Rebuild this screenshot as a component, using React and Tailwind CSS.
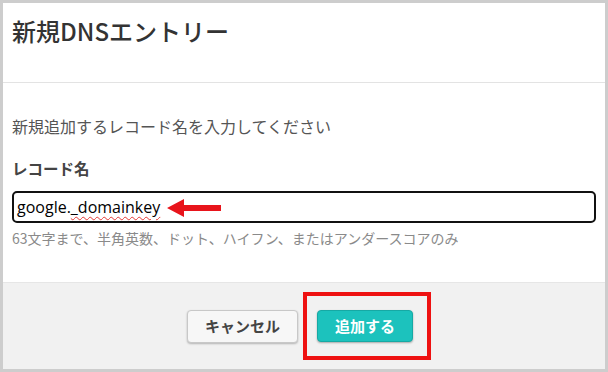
import React from 'react';

const font = { fontFamily: '"Noto Sans CJK JP", "Noto Sans", sans-serif' };

const Arrow = () => (
    <svg width="56" height="20" viewBox="0 0 56 20" className="absolute left-[153px] top-[5px]">
        <polygon points="0,10 17,1 17,7 54,7 54,13 17,13 17,19" fill="#e8141b" />
    </svg>
);

export default function App() {
    return (
        <div className="w-[608px] h-[372px] bg-[#cdcdcd] p-[3px]" style={font}>
            <div className="h-full flex flex-col bg-white">
                {/* header */}
                <div className="h-[80px] border-b border-[#e3e3e3] px-[9px] pt-[12px]">
                    <h1 className="text-[24px] leading-[32px] font-medium text-[#333]">新規DNSエントリー</h1>
                </div>

                {/* body */}
                <div className="flex-1 px-[9px] pt-[32px]">
                    <p className="text-[16px] leading-[22px] text-[#555]">新規追加するレコード名を入力してください</p>
                    <p className="mt-[20px] text-[15.5px] leading-[22px] font-bold text-[#444]">レコード名</p>
                    <div className="relative mt-[12px] h-[32px] rounded-[5px] border-2 border-[#111] pl-[3px] flex items-center">
                        <span className="text-[16px] text-black" style={{ fontFamily: '"Open Sans", "Noto Sans", sans-serif' }}>
                            google.<span className="underline decoration-wavy decoration-[#e53935] decoration-1 underline-offset-[3px]">_domainkey</span>
                        </span>
                        <Arrow />
                    </div>
                    <p className="mt-[5px] text-[14px] leading-[20px] text-[#8a8a8a]">63文字まで、半角英数、ドット、ハイフン、またはアンダースコアのみ</p>
                </div>

                {/* footer */}
                <div className="h-[87px] bg-[#f1f1f1] border-t border-[#e6e6e6] flex items-center justify-center gap-[19px] pr-[8px]">
                    <button className="w-[111px] h-[33px] rounded-[4px] border border-[#c8c8c8] bg-[#f7f7f7] shadow-[0_1px_2px_rgba(0,0,0,0.25)] text-[15px] font-bold text-[#444]">
                        キャンセル
                    </button>
                    <div className="relative">
                        <button className="w-[96px] h-[32px] rounded-[4px] bg-[#1cc2bd] border border-[#16a9a4] shadow-[0_1px_2px_rgba(0,0,0,0.3)] text-[15px] font-bold text-white">
                            追加する
                        </button>
                        <div className="absolute -left-[14px] -top-[18px] w-[128px] h-[68px] border-4 border-[#ee1111]" />
                    </div>
                </div>
            </div>
        </div>
    );
}
